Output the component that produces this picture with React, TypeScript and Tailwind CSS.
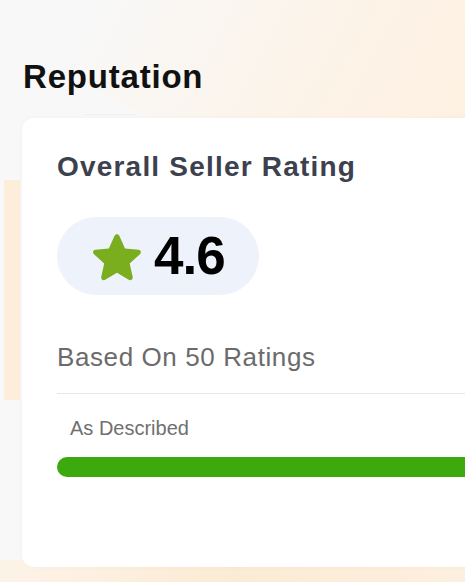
import React from "react";

function Star() {
  return (
    <svg width="52" height="49" viewBox="2 1.5 48 46" className="shrink-0">
      <path
        d="M26 3.5c1 0 1.7.6 2.2 1.6l5.3 11.9 12.6 1.2c2.3.2 3.1 2.8 1.4 4.3l-9.6 8.5 2.8 12.6c.5 2.2-1.8 3.9-3.7 2.7L26 39.7 14.9 46.3c-1.9 1.2-4.2-.5-3.7-2.7l2.8-12.6-9.6-8.5c-1.7-1.5-.9-4.1 1.4-4.3l12.6-1.2 5.3-11.9c.5-1 1.2-1.6 2.3-1.6z"
        fill="#7aae1f"
      />
    </svg>
  );
}

export default function App() {
  return (
    <div
      className="relative w-[465px] h-[582px] overflow-hidden bg-[#f8f8f8]"
      style={{ fontFamily: '"Liberation Sans", Arial, sans-serif' }}
    >
      {/* decorative background */}
      <div className="pointer-events-none absolute -top-[120px] right-[-160px] w-[520px] h-[330px] rotate-[28deg] bg-gradient-to-l from-[#fdefdc] via-[#fdf3e7] to-[#f8f8f8]" />
      <div className="pointer-events-none absolute left-[4px] top-[180px] w-[16px] h-[220px] bg-[#fdeedb]" />
      <div className="pointer-events-none absolute left-0 right-0 bottom-0 h-[22px] bg-gradient-to-r from-[#fcf3e8] via-[#fcebd4] to-[#fdefdf]" />

      <div className="relative pt-[60px]">
        <h2 className="pl-[23px] text-[33px] leading-[33px] font-bold text-[#111] tracking-[0.8px]">
          Reputation
        </h2>
        <div className="ml-[85px] mt-[21px] w-[50px] h-[2px] border-t border-dotted border-[#ececec]" />
        <div className="ml-[22px] mt-[2px] w-[470px] h-[449px] rounded-[12px] bg-white shadow-[0_0_4px_rgba(0,0,0,0.03)] pl-[35px] pt-[35px]">
          <div className="text-[28px] leading-[28px] font-bold text-[#3d414d] tracking-[1.2px]">
            Overall Seller Rating
          </div>
          <div className="mt-[36px] w-[202px] h-[78px] rounded-full bg-[#eef2fa] flex items-center pl-[34px]">
            <Star />
            <span className="ml-[11px] text-[53px] leading-[52px] font-bold text-black tracking-[-1px]">
              4.6
            </span>
          </div>
          <div className="mt-[49px] text-[26px] leading-[26px] text-[#6b6b6b] tracking-[0.6px]">
            Based On 50 Ratings
          </div>
          <div className="mt-[23px] h-px bg-[#e6e6e6]" />
          <div className="mt-[24px] pl-[13px] text-[20px] leading-[20px] text-[#707070]">
            As Described
          </div>
          <div className="mt-[19px] h-[20px] rounded-full bg-[#3ca90f]" />
        </div>
      </div>
    </div>
  );
}
